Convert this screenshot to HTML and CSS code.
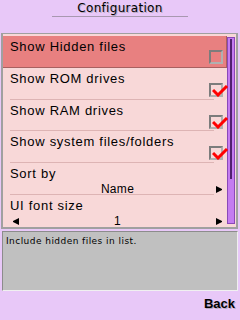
FILE: index.html
```html
<!DOCTYPE html>
<html lang="en">
<head>
    <meta charset="UTF-8">
    <title>Configuration</title>
    <link rel="stylesheet" href="styles.css">
</head>
<body>
    <div class="header">
        <h1 class="title">Configuration</h1>
    </div>

    <div class="list-box">
        <div class="rows">
            <div class="row selected">
                <span class="label">Show Hidden files</span>
                <span class="check"></span>
            </div>
            <div class="row">
                <span class="label">Show ROM drives</span>
                <span class="check on">
                    <svg viewBox="0 0 17 12" width="17" height="12"><path d="M1 5 L6 10 L15 1" fill="none" stroke="#f00" stroke-width="3"/></svg>
                </span>
            </div>
            <div class="row">
                <span class="label">Show RAM drives</span>
                <span class="check on">
                    <svg viewBox="0 0 17 12" width="17" height="12"><path d="M1 5 L6 10 L15 1" fill="none" stroke="#f00" stroke-width="3"/></svg>
                </span>
            </div>
            <div class="row">
                <span class="label">Show system files/folders</span>
                <span class="check on">
                    <svg viewBox="0 0 17 12" width="17" height="12"><path d="M1 5 L6 10 L15 1" fill="none" stroke="#f00" stroke-width="3"/></svg>
                </span>
            </div>
            <div class="row choice">
                <span class="label">Sort by</span>
                <div class="value-line">
                    <span class="arrow"></span>
                    <span class="value">Name</span>
                    <span class="arrow right"></span>
                </div>
            </div>
            <div class="row choice last">
                <span class="label">UI font size</span>
                <div class="value-line">
                    <span class="arrow left"></span>
                    <span class="value">1</span>
                    <span class="arrow right"></span>
                </div>
            </div>
        </div>
        <div class="scrollbar"><div class="thumb"></div></div>
    </div>

    <div class="desc">Include hidden files in list.</div>

    <div class="softkeys">
        <span class="softkey">Back</span>
    </div>
</body>
</html>
```

FILE: styles.css
```css
/* base */
body { margin: 0; width: 240px; height: 320px; overflow: hidden; background-color: #e8c8f8; font-family: "Liberation Sans", Arial, sans-serif; color: #000; display: flex; flex-direction: column; }

/* title */
.header { height: 33px; box-sizing: border-box; padding-top: 1px; }
.title { margin: 0 auto; width: 136px; font-family: "DejaVu Sans", Verdana, sans-serif; font-size: 12px; font-weight: normal; text-align: center; line-height: 14px; padding-bottom: 1px; border-bottom: 1px solid #a898b0; text-shadow: 1px 1px 0 #b8a8c0; letter-spacing: 0.3px; }

/* list */
.list-box { margin: 0 2px 0 1px; height: 196px; box-sizing: border-box; border: 2px solid #a0a0a0; border-top-width: 1px; background-color: #f8d8d8; display: flex; padding: 2px 1px 0 0; }
.rows { flex-grow: 1; display: flex; flex-direction: column; }
.row { height: 32px; box-sizing: border-box; position: relative; padding: 1px 0 0 7px; }
.row::after { content: ""; position: absolute; left: 7px; right: 13px; bottom: 0; border-bottom: 1px solid #ddb4b4; }
.row.selected { padding-top: 1px; background-color: #e88080; border-right: 1px solid #a86060; border-bottom: 1px solid #a86060; }
.row.selected::after, .row.last::after { display: none; }
.label { font-size: 13px; line-height: 15px; letter-spacing: 0.7px; white-space: nowrap; }

.check { position: absolute; right: 4px; top: 15px; width: 14px; height: 14px; box-sizing: border-box; border: 2px solid #7c7c7c; border-right-color: #b0b0b0; border-bottom-color: #b0b0b0; }
.row.selected .check { right: 3px; top: 14px; }
.check svg { position: absolute; left: 1px; top: 0; }

.value-line { display: flex; align-items: center; height: 15px; margin-top: 0; padding: 0 5px 0 3px; }
.value { flex-grow: 1; text-align: center; font-size: 12px; line-height: 15px; letter-spacing: 0.3px; }
.arrow { width: 6px; height: 7px; box-sizing: border-box; }
.arrow.right { border-top: 3.5px solid transparent; border-bottom: 3.5px solid transparent; border-left: 6px solid #000; }
.arrow.left { border-top: 3.5px solid transparent; border-bottom: 3.5px solid transparent; border-right: 6px solid #000; }

.scrollbar { width: 8px; margin: 1px 0 3px 0; box-sizing: border-box; background-color: #c47cf0; border: 1px solid #8a48b8; }
.thumb { width: 2px; height: 140px; margin: 1px 0 0 2px; background-color: #502070; }

/* description */
.desc { margin: 2px 2px 0 2px; height: 60px; box-sizing: border-box; background-color: #c0c0c0; border: 1px solid #8c8c8c; border-right-color: #f0f0f0; border-bottom-color: #f0f0f0; padding: 3px 3px; font-family: "DejaVu Sans", Verdana, sans-serif; font-size: 9px; line-height: 12px; letter-spacing: 0.45px; }

/* softkeys */
.softkeys { flex-grow: 1; display: flex; justify-content: flex-end; align-items: flex-end; padding: 0 5px 9px 0; }
.softkey { font-size: 13px; font-weight: bold; line-height: 14px; text-shadow: 1px 1px 0 #b8a8c0; }
```
